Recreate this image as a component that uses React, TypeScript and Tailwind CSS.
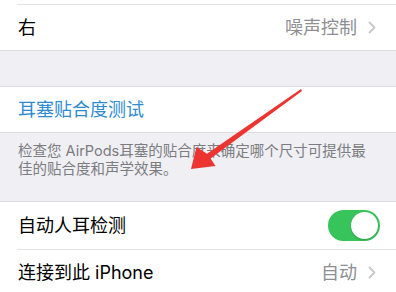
function Chevron() {
  return (
    <svg width="8" height="13" viewBox="0 0 8 13" fill="none" className="ml-[11px]">
      <path d="M1.5 1.5 L6.5 6.5 L1.5 11.5" stroke="#c7c7cc" strokeWidth="1.8" strokeLinecap="round" strokeLinejoin="round" />
    </svg>
  );
}

function Toggle() {
  return (
    <div className="w-[52px] h-[31px] rounded-full bg-[#37c45a] relative">
      <div className="absolute right-[2px] top-[2px] w-[27px] h-[27px] rounded-full bg-white shadow-[0_1px_2px_rgba(0,0,0,0.2)]" />
    </div>
  );
}

export default function App() {
  return (
    <div className="relative w-[396px] h-[292px] overflow-hidden bg-[#efeff4] text-black font-['Inter','Noto_Sans_CJK_SC',sans-serif]">
      {/* first group, tail of previous row + 右 */}
      <div className="bg-white border-b border-[#dcdce0]">
        <div className="ml-[17px] h-[5px] border-b border-[#e3e3e7]" />
        <div className="h-[45px] flex items-center justify-between pl-[18px] pr-[20px]">
          <span className="text-[18px]">右</span>
          <div className="flex items-center">
            <span className="text-[18px] text-[#8e8e93]">噪声控制</span>
            <Chevron />
          </div>
        </div>
      </div>

      <div className="h-[35px]" />

      <div className="bg-white border-t border-b border-[#dcdce0] h-[47px] flex items-center pl-[18px]">
        <span className="text-[18px] text-[#2e8bd0]">耳塞贴合度测试</span>
      </div>

      <div className="h-[68px] px-[18px] pt-[9px] text-[14.5px] leading-[18px] text-[#7c7c81]">
        检查您 AirPods耳塞的贴合度来确定哪个尺寸可提供最<br />佳的贴合度和声学效果。
      </div>

      <div className="bg-white border-t border-[#dcdce0]">
        <div className="h-[47px] flex items-center justify-between pl-[18px] pr-[16px]">
          <span className="text-[18px]">自动人耳检测</span>
          <Toggle />
        </div>
        <div className="ml-[17px] border-t border-[#e3e3e7] h-[46px] flex items-center justify-between pl-[1px] pr-[20px]">
          <span className="text-[18px]">连接到此 iPhone</span>
          <div className="flex items-center">
            <span className="text-[18px] text-[#8e8e93]">自动</span>
            <Chevron />
          </div>
        </div>
      </div>

      {/* annotation arrow */}
      <svg className="absolute left-0 top-0" width="396" height="292" viewBox="0 0 396 292">
        <polygon
          points="301,89 302,91 210.6,158.5 215.5,166 191,169 196.5,147 207,153.7"
          fill="#ec3530"
        />
      </svg>
    </div>
  );
}
